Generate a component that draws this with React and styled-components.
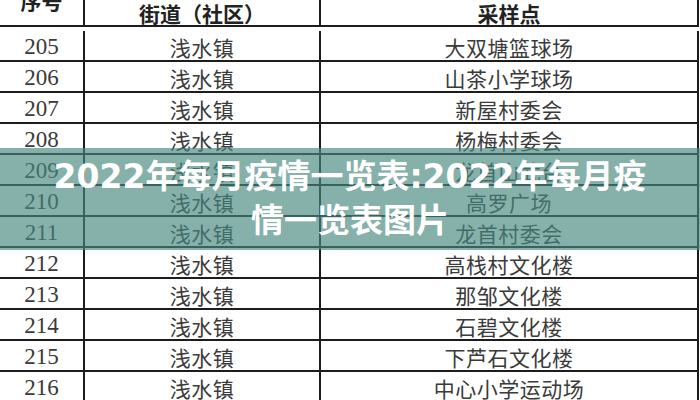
import React from 'react'
import styled, { createGlobalStyle } from 'styled-components'

const GlobalStyle = createGlobalStyle`
  html, body {
    margin: 0;
    padding: 0;
    background: #fff;
  }
`;

const Page = styled.div`
  position: relative;
  width: 700px;
  height: 400px;
  overflow: hidden;
  background: #fff;
`;

const Table = styled.div`
  display: grid;
  grid-template-columns: 85px 236px 378px;
  grid-auto-rows: 31px;
`;

const HeadCell = styled.div`
  height: 27px;
  box-sizing: border-box;
  border-right: 2px solid #1c1c1c;
  border-bottom: 2px solid #1c1c1c;
  display: flex;
  justify-content: center;
  align-items: ${p => (p.$top ? 'flex-start' : 'flex-end')};
  font-family: "Noto Sans CJK SC", sans-serif;
  font-weight: 700;
  font-size: 21px;
  line-height: 24px;
  color: #222;
  overflow: hidden;
  span {
    margin-top: ${p => (p.$top ? '-12px' : '0')};
    margin-bottom: ${p => (p.$top ? '0' : '0')};
  }
`;

const Cell = styled.div`
  box-sizing: border-box;
  border-right: 2px solid #1c1c1c;
  border-bottom: 2px solid #1c1c1c;
  display: flex;
  justify-content: center;
  align-items: center;
  padding-top: 3px;
  font-family: ${p => (p.$num ? '"Liberation Serif", serif' : '"Noto Sans CJK SC", sans-serif')};
  font-size: ${p => (p.$num ? '23px' : '21px')};
  letter-spacing: ${p => (p.$num ? '0' : '0.5px')};
  color: #3a3a3a;
  white-space: nowrap;
`;

const Banner = styled.div`
  position: absolute;
  left: 0;
  right: 0;
  top: 148px;
  height: 102px;
  background: rgba(71, 135, 126, 0.66);
  display: flex;
  align-items: center;
  justify-content: center;
`;

const Title = styled.h1`
  margin: 0;
  width: 600px;
  text-align: center;
  font-family: "DejaVu Sans", "Noto Sans CJK SC", sans-serif;
  font-weight: 700;
  font-size: 33px;
  line-height: 44px;
  color: #fff;
`;

const rows = [
  ['205', '浅水镇', '大双塘篮球场'],
  ['206', '浅水镇', '山茶小学球场'],
  ['207', '浅水镇', '新屋村委会'],
  ['208', '浅水镇', '杨梅村委会'],
  ['209', '浅水镇', '龙首山武台'],
  ['210', '浅水镇', '高罗广场'],
  ['211', '浅水镇', '龙首村委会'],
  ['212', '浅水镇', '高栈村文化楼'],
  ['213', '浅水镇', '那邹文化楼'],
  ['214', '浅水镇', '石碧文化楼'],
  ['215', '浅水镇', '下芦石文化楼'],
  ['216', '浅水镇', '中心小学运动场'],
];

const App = () => {
  return (
    <Page>
      <GlobalStyle />
      <Table>
        <HeadCell $top><span>序号</span></HeadCell>
        <HeadCell><span>街道（社区）</span></HeadCell>
        <HeadCell><span>采样点</span></HeadCell>
        {rows.map(r => (
          <React.Fragment key={r[0]}>
            <Cell $num>{r[0]}</Cell>
            <Cell>{r[1]}</Cell>
            <Cell>{r[2]}</Cell>
          </React.Fragment>
        ))}
      </Table>
      <Banner>
        <Title>2022年每月疫情一览表:2022年每月疫情一览表图片</Title>
      </Banner>
    </Page>
  );
};

export default App;
